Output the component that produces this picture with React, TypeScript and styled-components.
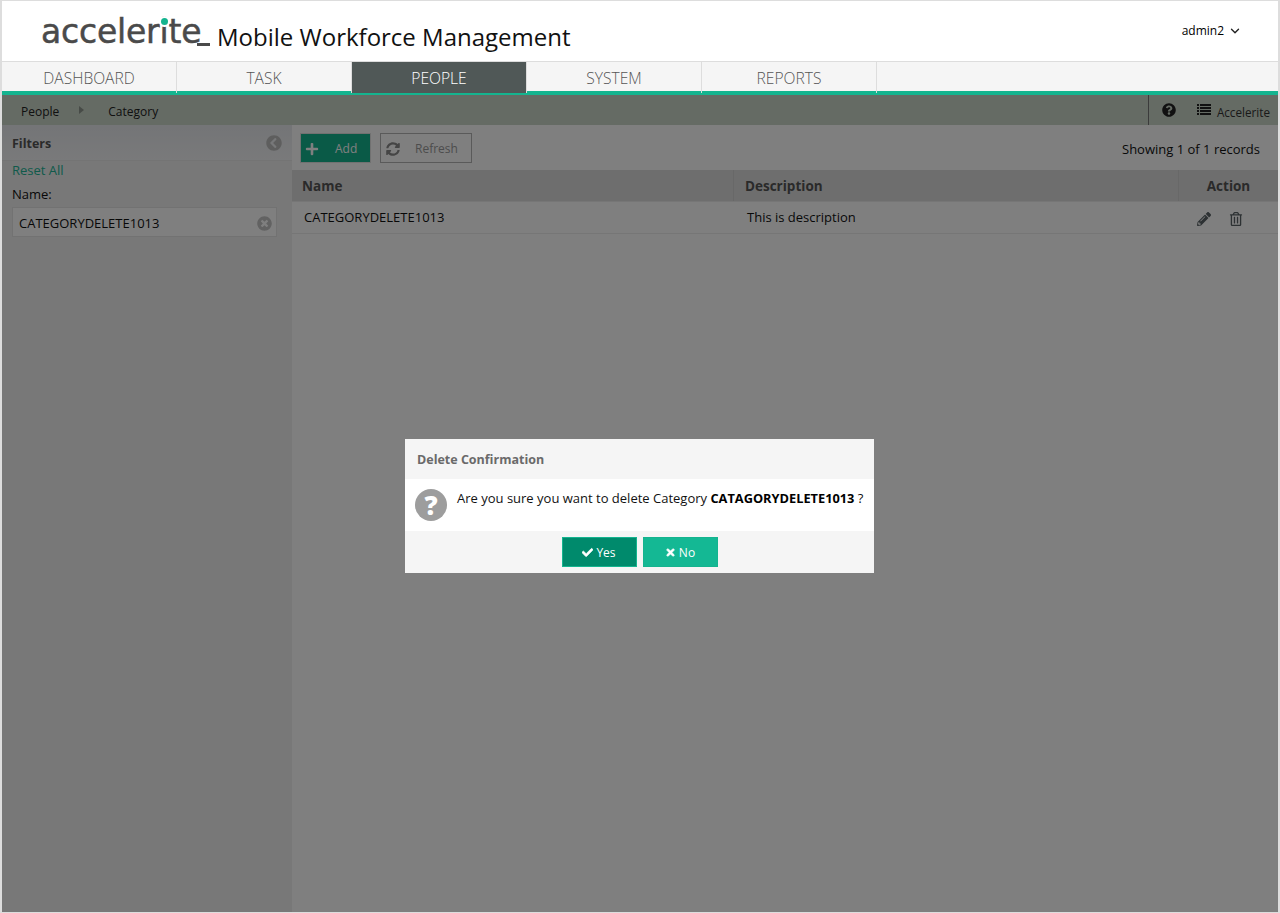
import { createGlobalStyle } from "styled-components";
import styled from "styled-components";
import { ChevronDown } from "lucide-react";
import {
  FaCheck,
  FaChevronCircleLeft,
  FaPencilAlt,
  FaPlus,
  FaQuestionCircle,
  FaRegTrashAlt,
  FaSyncAlt,
  FaTimes,
  FaTimesCircle,
} from "react-icons/fa";

const tabs = ["DASHBOARD", "TASK", "PEOPLE", "SYSTEM", "REPORTS"];

function ListIcon() {
  return (
    <svg width="14" height="12" viewBox="0 0 14 12" fill="#222">
      {[0, 3, 6, 9].map((y) => (
        <g key={y}>
          <rect x="0" y={y} width="2" height="2" />
          <rect x="3" y={y} width="11" height="2" />
        </g>
      ))}
    </svg>
  );
}

function App() {
  return (
    <>
      <GlobalStyle />
      <Page>
        <Header>
          <Logo>
            accelerite
            <LogoDot />
            <LogoTail />
          </Logo>
          <AppTitle>Mobile Workforce Management</AppTitle>
          <UserMenu>
            admin2 <ChevronDown size={14} strokeWidth={2.4} color="#222" />
          </UserMenu>
        </Header>

        <NavBar>
          {tabs.map((tab) => (
            <Tab key={tab} $active={tab === "PEOPLE"}>
              {tab}
            </Tab>
          ))}
        </NavBar>

        <SubBar>
          <Crumb>People</Crumb>
          <CrumbArrow />
          <Crumb>Category</Crumb>
          <SubBarRight>
            <FaQuestionCircle size={14} color="#222" />
            <OrgName>
              <ListIcon />
              <OrgLabel>Accelerite</OrgLabel>
            </OrgName>
          </SubBarRight>
        </SubBar>

        <Content>
          <Sidebar>
            <FilterHeader>
              <FilterTitle>Filters</FilterTitle>
              <FaChevronCircleLeft size={16} color="#bdbdbd" />
            </FilterHeader>
            <FilterBody>
              <ResetLink>Reset All</ResetLink>
              <FilterLabel>Name:</FilterLabel>
              <FilterInput>
                CATEGORYDELETE1013
                <FaTimesCircle size={15} color="#c4c4c4" />
              </FilterInput>
            </FilterBody>
          </Sidebar>

          <Main>
            <Toolbar>
              <AddButton>
                <FaPlus size={14} color="#fff" />
                Add
              </AddButton>
              <RefreshButton>
                <FaSyncAlt size={14} color="#8a8a8a" />
                Refresh
              </RefreshButton>
              <RecordCount>Showing 1 of 1 records</RecordCount>
            </Toolbar>
            <TableHead>
              <HeadCell>Name</HeadCell>
              <HeadCell $indent>Description</HeadCell>
              <HeadCell $center>Action</HeadCell>
            </TableHead>
            <TableRow>
              <RowCell>CATEGORYDELETE1013</RowCell>
              <RowCell $wide>This is description</RowCell>
              <ActionCell>
                <FaPencilAlt size={14} color="#5a6367" />
                <FaRegTrashAlt size={14} color="#5a6367" />
              </ActionCell>
            </TableRow>
          </Main>
        </Content>

        <Overlay />

        <Dialog>
          <DialogTitle>Delete Confirmation</DialogTitle>
          <DialogBody>
            <QuestionBadge>?</QuestionBadge>
            <span>
              Are you sure you want to delete Category <strong>CATAGORYDELETE1013</strong> ?
            </span>
          </DialogBody>
          <DialogFooter>
            <DialogButton $dark>
              <FaCheck size={11} />
              Yes
            </DialogButton>
            <DialogButton>
              <FaTimes size={11} />
              No
            </DialogButton>
          </DialogFooter>
        </Dialog>
      </Page>
    </>
  );
}
export default App;

const GlobalStyle = createGlobalStyle`
  html, body {
    margin: 0;
    padding: 0;
    background: #fff;
  }
  * {
    box-sizing: border-box;
  }
  body {
    font-family: "Open Sans", "Liberation Sans", sans-serif;
    font-size: 13px;
    color: #000;
  }
`;

const Page = styled.div`
  position: relative;
  width: 1280px;
  height: 913px;
  overflow: hidden;
  display: flex;
  flex-direction: column;
  border: 1px solid #ddd;
  border-left-width: 2px;
  border-right-width: 2px;
`;

const Header = styled.header`
  height: 60px;
  flex: none;
  display: flex;
  align-items: flex-start;
  background: #fff;
  padding-left: 39px;
`;

const Logo = styled.div`
  position: relative;
  width: 176px;
  height: 44px;
  margin-top: 9px;
  font-family: "DejaVu Sans", sans-serif;
  font-size: 33px;
  line-height: 44px;
  font-weight: 400;
  letter-spacing: -0.2px;
  color: #4a4a4a;
  -webkit-text-stroke: 0.5px #4a4a4a;
`;

const LogoDot = styled.span`
  position: absolute;
  left: 120px;
  top: 8px;
  width: 7px;
  height: 7px;
  border-radius: 50%;
  background: #14b48f;
  box-shadow: 0 0 0 2px #fff;
`;

const LogoTail = styled.span`
  position: absolute;
  left: 156px;
  top: 33px;
  width: 13px;
  height: 3px;
  background: #4a4a4a;
`;

const AppTitle = styled.h1`
  margin: 17px 0 0;
  font-size: 24px;
  line-height: 38px;
  font-weight: 400;
  color: #111;
`;

const UserMenu = styled.div`
  margin-left: auto;
  margin-right: 36px;
  margin-top: 20px;
  display: flex;
  align-items: center;
  gap: 4px;
  font-size: 12px;
  line-height: 20px;
`;

const NavBar = styled.nav`
  height: 34px;
  flex: none;
  display: flex;
  align-items: flex-start;
  background: #f5f5f5;
  border-top: 1px solid #ddd;
  border-bottom: 4px solid #14b48f;
`;

const Tab = styled.div<{ $active?: boolean }>`
  width: 175px;
  height: 31px;
  flex: none;
  text-align: center;
  font-size: 15.6px;
  line-height: 32px;
  font-weight: 300;
  color: ${(p) => (p.$active ? "#fff" : "#555")};
  background: ${(p) => (p.$active ? "#505857" : "transparent")};
  border-right: 1px solid #ddd;
`;

const SubBar = styled.div`
  height: 30px;
  flex: none;
  display: flex;
  align-items: center;
  padding-left: 19px;
  background: #cad6c8;
`;

const Crumb = styled.span`
  padding-top: 2px;
  font-size: 12px;
  color: #222;
`;

const CrumbArrow = styled.i`
  width: 0;
  height: 0;
  margin: 0 24px 0 20px;
  border-left: 5px solid #8f968e;
  border-top: 4px solid transparent;
  border-bottom: 4px solid transparent;
`;

const SubBarRight = styled.div`
  margin-left: auto;
  height: 100%;
  display: flex;
  align-items: center;
  gap: 21px;
  padding-left: 13px;
  border-left: 1px solid #777;
`;

const OrgName = styled.span`
  display: flex;
  align-items: center;
  gap: 6px;
  padding-right: 8px;
`;

const OrgLabel = styled.span`
  padding-top: 4px;
  font-size: 11.7px;
  color: #333;
`;

const Content = styled.div`
  flex: 1;
  display: flex;
  min-height: 0;
`;

const Sidebar = styled.aside`
  width: 290px;
  flex: none;
  background: #f0f0f0;
`;

const FilterHeader = styled.div`
  height: 36px;
  display: flex;
  align-items: center;
  justify-content: space-between;
  padding: 0 10px 0 10px;
  background: linear-gradient(#e8eaee, #f3f4f6);
  border-bottom: 1px solid #e8e8e8;
`;

const FilterTitle = styled.span`
  padding-top: 2px;
  font-weight: 700;
  font-size: 12.5px;
  color: #555;
`;

const FilterBody = styled.div`
  display: flex;
  flex-direction: column;
  padding: 0 15px 0 10px;
`;

const ResetLink = styled.a`
  font-size: 13px;
  line-height: 18px;
  color: #20b596;
`;

const FilterLabel = styled.label`
  margin-top: 6px;
  font-size: 13px;
  line-height: 18px;
  color: #111;
`;

const FilterInput = styled.div`
  height: 30px;
  margin-top: 4px;
  display: flex;
  align-items: center;
  justify-content: space-between;
  padding: 2px 4px 0 6px;
  border: 1px solid #e4e4e4;
  background: #fff;
  font-size: 13px;
  color: #111;
`;

const Main = styled.main`
  flex: 1;
  min-width: 0;
  background: #fff;
`;

const Toolbar = styled.div`
  height: 45px;
  display: flex;
  align-items: center;
  padding: 0 18px 0 8px;
`;

const AddButton = styled.button`
  width: 71px;
  height: 30px;
  display: flex;
  align-items: center;
  gap: 16px;
  padding: 2px 0 0 4px;
  border: 1px solid #e2e2e2;
  background: #14b48f;
  font: inherit;
  font-size: 12px;
  color: #fff;
`;

const RefreshButton = styled.button`
  width: 92px;
  height: 30px;
  margin-left: 9px;
  display: flex;
  align-items: center;
  gap: 15px;
  padding: 2px 0 0 5px;
  border: 1px solid #b5b5b5;
  background: #fff;
  font: inherit;
  font-size: 12px;
  color: #9a9a9a;
`;

const RecordCount = styled.span`
  margin-left: auto;
  padding-top: 2px;
  font-size: 13px;
  color: #111;
`;

const TableHead = styled.div`
  display: grid;
  grid-template-columns: 442px 445px 1fr;
  height: 32px;
  background: #dcdcdc;
  border-bottom: 1px solid #ececec;
`;

const HeadCell = styled.div<{ $center?: boolean; $indent?: boolean }>`
  display: flex;
  align-items: center;
  justify-content: ${(p) => (p.$center ? "center" : "flex-start")};
  padding-left: ${(p) => (p.$center ? "0" : p.$indent ? "11px" : "10px")};
  font-size: 13.5px;
  font-weight: 700;
  color: #555;
  border-right: 1px solid #d0d0d0;

  &:last-child {
    border-right: 0;
  }
`;

const TableRow = styled.div`
  display: grid;
  grid-template-columns: 442px 445px 1fr;
  height: 32px;
  padding-bottom: 2px;
  background: #fff;
  border-bottom: 1px solid #ececec;
`;

const RowCell = styled.div<{ $wide?: boolean }>`
  display: flex;
  align-items: center;
  padding-left: ${(p) => (p.$wide ? "13px" : "12px")};
  font-size: 13px;
  color: #111;
`;

const ActionCell = styled.div`
  display: flex;
  align-items: center;
  gap: 18px;
  padding: 5px 0 0 18px;
`;

const Overlay = styled.div`
  position: absolute;
  left: 0;
  right: 0;
  top: 94px;
  bottom: 0;
  background: rgba(0, 0, 0, 0.5);
`;

const Dialog = styled.div`
  position: absolute;
  left: 403px;
  top: 438px;
  width: 469px;
  height: 134px;
  display: flex;
  flex-direction: column;
  background: #f5f5f5;
`;

const DialogTitle = styled.div`
  height: 40px;
  flex: none;
  padding: 1px 12px 0;
  font-size: 12.5px;
  font-weight: 700;
  line-height: 40px;
  color: #6a6a6a;
`;

const DialogBody = styled.div`
  height: 52px;
  flex: none;
  display: flex;
  align-items: flex-start;
  gap: 10px;
  padding: 10px 0 10px 10px;
  background: #fff;
  font-size: 13px;
  line-height: 18px;
  white-space: nowrap;
  color: #111;

  strong {
    font-size: 12.8px;
    color: #000;
  }
`;

const QuestionBadge = styled.i`
  width: 32px;
  height: 32px;
  flex: none;
  border-radius: 50%;
  background: #9d9d9d;
  color: #fff;
  text-align: center;
  font-style: normal;
  font-weight: 800;
  font-size: 26px;
  line-height: 32px;
`;

const DialogFooter = styled.div`
  flex: 1;
  display: flex;
  align-items: center;
  justify-content: center;
  gap: 6px;
`;

const DialogButton = styled.button<{ $dark?: boolean }>`
  width: 75px;
  height: 30px;
  display: flex;
  align-items: center;
  justify-content: center;
  gap: 3px;
  padding: 0;
  border: 1px solid #14b48f;
  background: ${(p) => (p.$dark ? "#008a6c" : "#14b894")};
  color: #fff;
  font: inherit;
  font-size: 12px;

  svg {
    stroke: currentColor;
    stroke-width: 30px;
  }
`;
